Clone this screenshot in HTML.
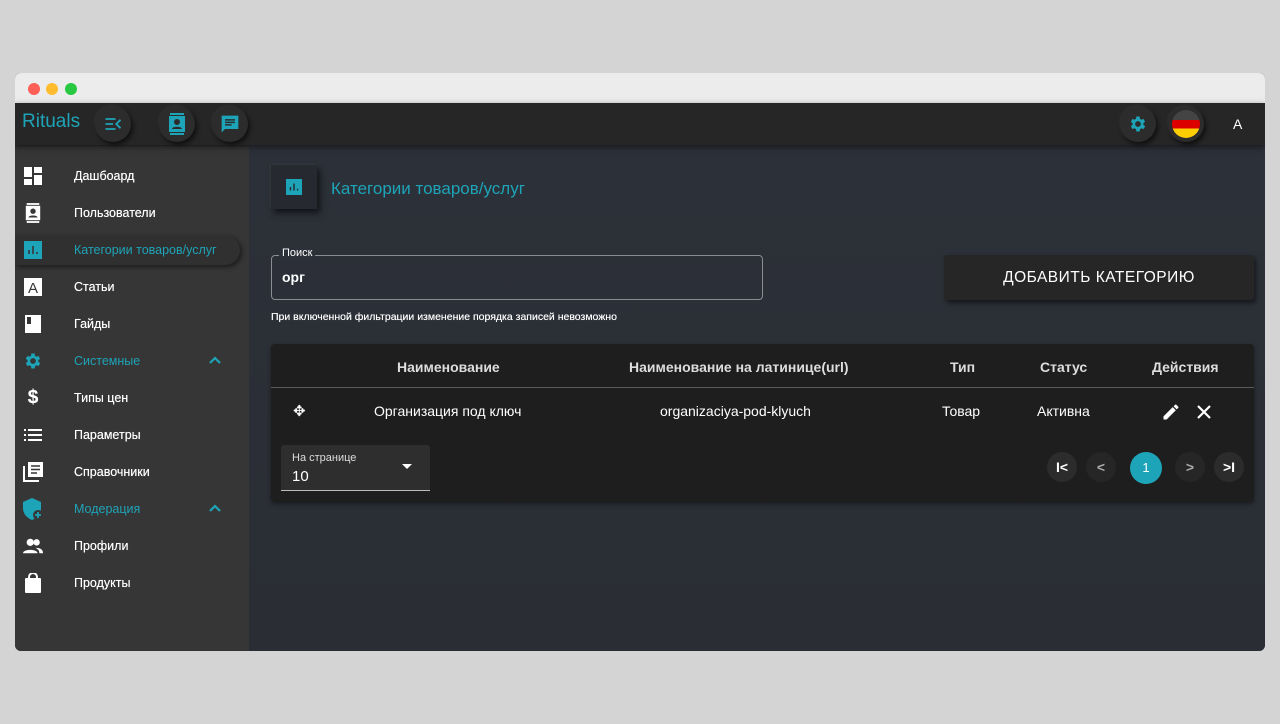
<!DOCTYPE html><html><head><meta charset="utf-8"><style>
*{box-sizing:border-box;margin:0;padding:0}
body{width:1280px;height:724px;background:#d4d4d4;font-family:"Liberation Sans",sans-serif;position:relative;overflow:hidden}
.win{position:absolute;left:15px;top:73px;width:1250px;height:578px;border-radius:6px;overflow:hidden;background:#2a2e35}
.tb{height:30px;background:#ececec;position:relative}
.dot{position:absolute;top:10px;width:12px;height:12px;border-radius:50%}
.hd{position:absolute;top:30px;left:0;right:0;height:42px;background:#262626;box-shadow:0 2px 6px rgba(0,0,0,.5);z-index:2}
.logo{position:absolute;left:7px;top:8px;color:#1ea4b8;font-size:19px}
.cb{position:absolute;top:3px;width:36px;height:36px;border-radius:50%;background:#2c2c2c;box-shadow:2px 3px 5px rgba(0,0,0,.6),-1px -1px 2px rgba(80,80,80,.3);display:flex;align-items:center;justify-content:center}
.sb{position:absolute;left:0;top:73px;width:234px;bottom:0;background:#363636}
.it{position:absolute;left:0;height:30px;width:225px;display:flex;align-items:center;color:#fff;font-size:12.5px;text-shadow:0 0 .4px #fff}
.it .ic{width:20px;height:20px;margin-left:8px;margin-right:31px;display:flex;align-items:center;justify-content:center}
.it.t{color:#1ea4b8;text-shadow:none}
.chev{position:absolute;left:194px;top:10px}
.main{position:absolute;left:234px;top:72px;right:0;bottom:0;background:linear-gradient(180deg,#2c3038,#2a2d34)}
</style></head><body>
<div class="win">
<div class="tb"><div class="dot" style="left:13px;background:#fe5f57"></div><div class="dot" style="left:31px;background:#febc2e"></div><div class="dot" style="left:50px;background:#28c840"></div></div>
<div class="hd">
<div class="logo">Rituals</div>
<div class="cb" style="left:80px"><svg width="20" height="20" viewBox="0 0 24 24"><path d="M3 6h12M3 12h9M3 18h12M21 7l-5 5 5 5" stroke="#1ea4b8" stroke-width="2.2" fill="none"/></svg></div>
<div class="cb" style="left:144px"><svg width="20" height="22" viewBox="0 0 20 22"><rect x="2" y="3" width="16" height="16" fill="#1ea4b8"/><rect x="3" y="0" width="14" height="2" fill="#1ea4b8"/><rect x="3" y="20" width="14" height="2" fill="#1ea4b8"/><circle cx="10" cy="9" r="3" fill="#2c2c2c"/><path d="M5 16c0-3 10-3 10 0z" fill="#2c2c2c"/></svg></div>
<div class="cb" style="left:197px"><svg width="20" height="20" viewBox="0 0 24 24"><path d="M2 2h20v16H6l-4 4z" fill="#1ea4b8"/><path d="M6 7h12M6 10h12M6 13h8" stroke="#2c2c2c" stroke-width="1.8"/></svg></div>
<div class="cb" style="left:1105px"><svg width="20" height="20" viewBox="0 0 24 24"><path fill="#1ea4b8" d="M19.4 13a7.5 7.5 0 000-2l2.1-1.6-2-3.5-2.5 1a7 7 0 00-1.7-1L15 3h-4l-.4 2.9a7 7 0 00-1.7 1l-2.5-1-2 3.5L6.5 11a7.5 7.5 0 000 2l-2.1 1.6 2 3.5 2.5-1a7 7 0 001.7 1L11 21h4l.4-2.9a7 7 0 001.7-1l2.5 1 2-3.5zM13 15.5a3.5 3.5 0 110-7 3.5 3.5 0 010 7z" transform="translate(-1 0)"/></svg></div>
<div class="cb" style="left:1153px"><div style="width:28px;height:28px;border-radius:50%;overflow:hidden;background:linear-gradient(#444 0 35%,#dd0000 35% 66%,#ffce00 66%)"></div></div>
<div style="position:absolute;left:1218px;top:13px;color:#fff;font-size:14px">A</div>
</div>
<div class="sb">
<div class="it" style="top:15px"><div class="ic"><svg width="18" height="18" viewBox="0 0 18 18" fill="#fff"><rect x="0" y="0" width="8" height="10"/><rect x="10" y="0" width="8" height="6"/><rect x="0" y="12" width="8" height="6"/><rect x="10" y="8" width="8" height="10"/></svg></div>Дашбоард</div>
<div class="it" style="top:52px"><div class="ic"><svg width="18" height="20" viewBox="0 0 20 22"><rect x="2" y="3" width="16" height="16" fill="#fff"/><rect x="3" y="0" width="14" height="2" fill="#fff"/><rect x="3" y="20" width="14" height="2" fill="#fff"/><circle cx="10" cy="9" r="3" fill="#363636"/><path d="M5 16c0-3 10-3 10 0z" fill="#363636"/></svg></div>Пользователи</div>
<div class="it t" style="top:89px;border-radius:0 16px 16px 0;background:#303030;box-shadow:2px 2px 5px rgba(0,0,0,.5);width:225px"><div class="ic"><svg width="18" height="18" viewBox="0 0 18 18"><rect width="18" height="18" fill="#1ea4b8"/><path d="M5 13V9M9 13V5M13 13v-2" stroke="#363636" stroke-width="1.6"/></svg></div>Категории товаров/услуг</div>
<div class="it" style="top:126px"><div class="ic"><svg width="18" height="18" viewBox="0 0 18 18"><rect width="18" height="18" fill="#fff"/><text x="9" y="15" text-anchor="middle" font-size="15" font-family="Liberation Sans" fill="#363636">A</text></svg></div>Статьи</div>
<div class="it" style="top:163px"><div class="ic"><svg width="16" height="18" viewBox="0 0 16 18"><rect width="16" height="18" fill="#fff"/><rect x="2" y="2" width="4" height="7" fill="#363636"/></svg></div>Гайды</div>
<div class="it t" style="top:200px"><div class="ic"><svg width="20" height="20" viewBox="0 0 24 24"><path fill="#1ea4b8" d="M19.4 13a7.5 7.5 0 000-2l2.1-1.6-2-3.5-2.5 1a7 7 0 00-1.7-1L15 3h-4l-.4 2.9a7 7 0 00-1.7 1l-2.5-1-2 3.5L6.5 11a7.5 7.5 0 000 2l-2.1 1.6 2 3.5 2.5-1a7 7 0 001.7 1L11 21h4l.4-2.9a7 7 0 001.7-1l2.5 1 2-3.5zM13 15.5a3.5 3.5 0 110-7 3.5 3.5 0 010 7z" transform="translate(-1 0)"/></svg></div>Системные<svg class="chev" width="12" height="8" viewBox="0 0 12 8"><path d="M1 7l5-5 5 5" stroke="#1ea4b8" stroke-width="2.2" fill="none"/></svg></div>
<div class="it" style="top:237px"><div class="ic" style="font-size:19px;font-weight:bold">$</div>Типы цен</div>
<div class="it" style="top:274px"><div class="ic"><svg width="18" height="12" viewBox="0 0 18 12" fill="#fff"><rect y="0" width="2" height="2"/><rect y="5" width="2" height="2"/><rect y="10" width="2" height="2"/><rect x="4" y="0" width="14" height="2"/><rect x="4" y="5" width="14" height="2"/><rect x="4" y="10" width="14" height="2"/></svg></div>Параметры</div>
<div class="it" style="top:311px"><div class="ic"><svg width="20" height="20" viewBox="0 0 20 20"><path d="M1 4v15h15" stroke="#fff" stroke-width="2" fill="none"/><rect x="5" y="0" width="15" height="15" fill="#fff"/><path d="M8 4h9M8 7.5h9M8 11h6" stroke="#363636" stroke-width="1.6"/></svg></div>Справочники</div>
<div class="it t" style="top:348px"><div class="ic"><svg width="20" height="22" viewBox="0 0 20 22"><path d="M9 0l9 4v6c0 6-4 10-9 12C4 20 0 16 0 10V4z" fill="#1ea4b8"/><circle cx="15" cy="17" r="5" fill="#363636"/><path d="M15 14v6M12 17h6" stroke="#1ea4b8" stroke-width="1.8"/></svg></div>Модерация<svg class="chev" width="12" height="8" viewBox="0 0 12 8"><path d="M1 7l5-5 5 5" stroke="#1ea4b8" stroke-width="2.2" fill="none"/></svg></div>
<div class="it" style="top:385px"><div class="ic"><svg width="22" height="16" viewBox="0 0 22 16" fill="#fff"><circle cx="8" cy="4" r="4"/><circle cx="15" cy="4" r="3.5"/><path d="M0 16c0-5 16-5 16 0z"/><path d="M14 10c4 0 8 1 8 6h-4c0-3-1-4-4-6z"/></svg></div>Профили</div>
<div class="it" style="top:422px"><div class="ic"><svg width="16" height="20" viewBox="0 0 16 20"><rect y="5" width="16" height="15" rx="1" fill="#fff"/><path d="M4 7V4a4 4 0 018 0v3" stroke="#fff" stroke-width="2" fill="none"/></svg></div>Продукты</div>
</div>
<div class="main">
<div style="position:absolute;left:22px;top:20px;width:46px;height:44px;background:#262a30;box-shadow:3px 4px 6px rgba(0,0,0,.6),-1px -1px 2px rgba(90,90,90,.3);display:flex;align-items:center;justify-content:center"><svg width="16" height="16" viewBox="0 0 18 18"><rect width="18" height="18" fill="#1ea4b8"/><path d="M5 13V9M9 13V5M13 13v-2" stroke="#262a30" stroke-width="1.6"/></svg></div>
<div style="position:absolute;left:82px;top:34px;color:#1ea4b8;font-size:17px">Категории товаров/услуг</div>
<div style="position:absolute;left:22px;top:110px;width:492px;height:45px;border:1px solid #8a8d92;border-radius:4px"></div>
<div style="position:absolute;left:30px;top:102px;padding:0 3px;background:#2c3038;color:#fff;font-size:11px">Поиск</div>
<div style="position:absolute;left:33px;top:124px;color:#fff;font-size:14px;font-weight:bold">орг</div>
<div style="position:absolute;left:695px;top:110px;width:310px;height:45px;background:#262626;box-shadow:2px 3px 5px rgba(0,0,0,.5);border-radius:3px;color:#fff;font-size:15.5px;letter-spacing:.5px;text-align:center;line-height:45px">ДОБАВИТЬ КАТЕГОРИЮ</div>
<div style="position:absolute;left:22px;top:166px;color:#fff;font-size:10.5px;text-shadow:0 0 .4px #fff">При включенной фильтрации изменение порядка записей невозможно</div>
<div style="position:absolute;left:22px;top:199px;width:983px;height:158px;background:#1e1e1e;border-radius:4px;box-shadow:0 2px 4px rgba(0,0,0,.4)">
<div style="height:44px;border-bottom:1px solid #5a5a5a;position:relative;color:#ddd;font-weight:bold;font-size:14px">
<span style="position:absolute;left:126px;top:15px">Наименование</span>
<span style="position:absolute;left:358px;top:15px">Наименование на латинице(url)</span>
<span style="position:absolute;left:679px;top:15px">Тип</span>
<span style="position:absolute;left:769px;top:15px">Статус</span>
<span style="position:absolute;left:881px;top:15px">Действия</span>
</div>
<div style="position:relative;height:45px;color:#fff;font-size:14px">
<span style="position:absolute;left:22px;top:14px;font-size:15px">✥</span>
<span style="position:absolute;left:103px;top:15px">Организация под ключ</span>
<span style="position:absolute;left:389px;top:15px">organizaciya-pod-klyuch</span>
<span style="position:absolute;left:671px;top:15px">Товар</span>
<span style="position:absolute;left:766px;top:15px">Активна</span>
<svg style="position:absolute;left:890px;top:14px" width="20" height="20" viewBox="0 0 24 24"><path fill="#fff" d="M3 17.25V21h3.75L17.8 9.94l-3.75-3.75zM20.7 7.04a1 1 0 000-1.41l-2.34-2.34a1 1 0 00-1.41 0l-1.83 1.83 3.75 3.75z"/></svg>
<svg style="position:absolute;left:925px;top:16px" width="16" height="16" viewBox="0 0 16 16"><path d="M2 2l12 12M14 2L2 14" stroke="#fff" stroke-width="2.2"/></svg>
</div>
<div style="position:absolute;left:10px;top:101px;width:149px;height:46px;background:#2e2e2e;border-bottom:1px solid #bbb;border-radius:3px 3px 0 0">
<span style="position:absolute;left:11px;top:7px;color:#ddd;font-size:11px">На странице</span>
<span style="position:absolute;left:11px;top:23px;color:#fff;font-size:15px">10</span>
<span style="position:absolute;left:121px;top:19px;width:0;height:0;border-left:5px solid transparent;border-right:5px solid transparent;border-top:5px solid #fff"></span>
</div>
<div style="position:absolute;left:776px;top:108px;width:30px;height:30px;border-radius:50%;background:#2c2c2c;color:#fff;font-weight:bold;text-align:center;line-height:30px;font-size:14px">I&lt;</div>
<div style="position:absolute;left:815px;top:108px;width:30px;height:30px;border-radius:50%;background:#262626;color:#aaa;font-weight:bold;text-align:center;line-height:30px;font-size:14px">&lt;</div>
<div style="position:absolute;left:859px;top:108px;width:32px;height:32px;border-radius:50%;background:#1ea4b8;color:#fff;text-align:center;line-height:32px;font-size:13px">1</div>
<div style="position:absolute;left:904px;top:108px;width:30px;height:30px;border-radius:50%;background:#262626;color:#aaa;font-weight:bold;text-align:center;line-height:30px;font-size:14px">&gt;</div>
<div style="position:absolute;left:943px;top:108px;width:30px;height:30px;border-radius:50%;background:#2c2c2c;color:#fff;font-weight:bold;text-align:center;line-height:30px;font-size:14px">&gt;I</div>
</div>
</div>
</div>
</body></html>
